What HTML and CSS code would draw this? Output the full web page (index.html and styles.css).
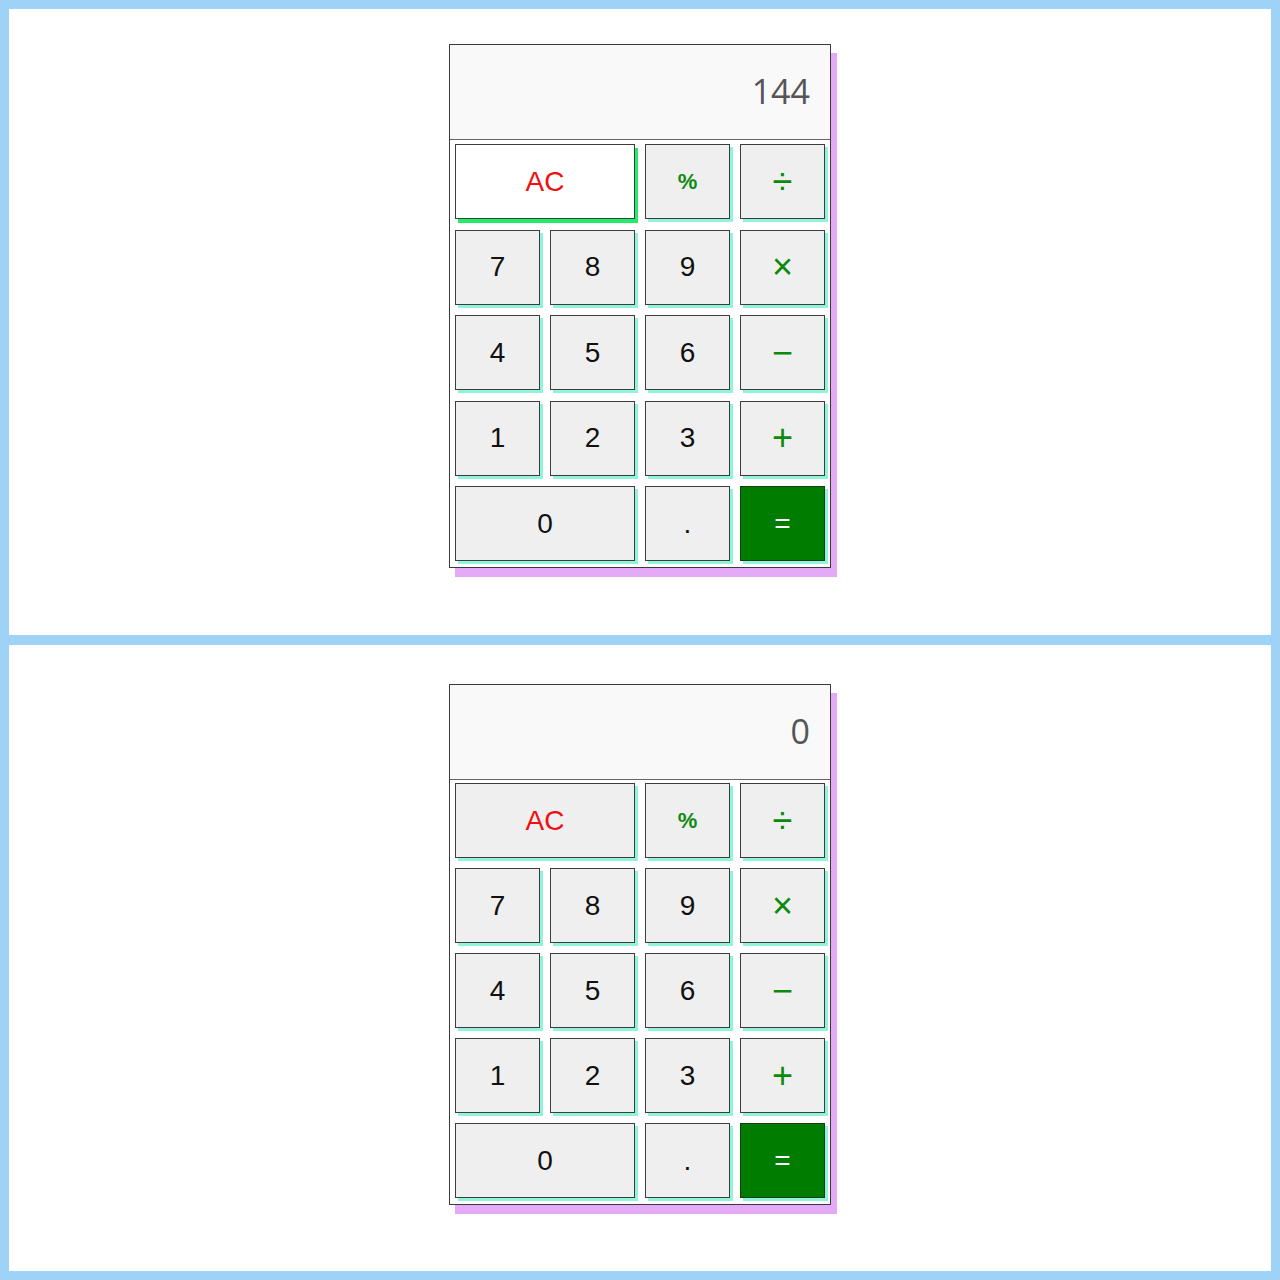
FILE: index.html
```html
<!DOCTYPE html>
<html>
<head>
<meta charset="utf-8">
<link rel="stylesheet" href="styles.css">
</head>
<body>
<div class="frame">
  <section class="panel panel-top">
    <div class="calc">
      <div class="display">144</div>
      <div class="keys">
        <button class="key key-wide key-ac key-active">AC</button>
        <button class="key key-pct">%</button>
        <button class="key key-op">÷</button>
        <button class="key">7</button>
        <button class="key">8</button>
        <button class="key">9</button>
        <button class="key key-op">×</button>
        <button class="key">4</button>
        <button class="key">5</button>
        <button class="key">6</button>
        <button class="key key-op">−</button>
        <button class="key">1</button>
        <button class="key">2</button>
        <button class="key">3</button>
        <button class="key key-op">+</button>
        <button class="key key-wide">0</button>
        <button class="key">.</button>
        <button class="key key-eq">=</button>
      </div>
    </div>
  </section>
  <section class="panel panel-bottom">
    <div class="calc">
      <div class="display">0</div>
      <div class="keys keys-tight">
        <button class="key key-wide key-ac">AC</button>
        <button class="key key-pct">%</button>
        <button class="key key-op">÷</button>
        <button class="key">7</button>
        <button class="key">8</button>
        <button class="key">9</button>
        <button class="key key-op">×</button>
        <button class="key">4</button>
        <button class="key">5</button>
        <button class="key">6</button>
        <button class="key key-op">−</button>
        <button class="key">1</button>
        <button class="key">2</button>
        <button class="key">3</button>
        <button class="key key-op">+</button>
        <button class="key key-wide">0</button>
        <button class="key">.</button>
        <button class="key key-eq">=</button>
      </div>
    </div>
  </section>
</div>
</body>
</html>
```

FILE: styles.css
```css
html, body {
  margin: 0;
  padding: 0;
}
body {
  background: #9ed2f6;
  font-family: "Liberation Sans", Arial, sans-serif;
}
.frame {
  padding: 9px;
  display: flex;
  flex-direction: column;
  gap: 10px;
}
.panel {
  background: #ffffff;
  height: 626px;
  box-sizing: border-box;
  display: flex;
  justify-content: center;
  align-items: flex-start;
}
.panel-top {
  padding-top: 35px;
}
.panel-bottom {
  padding-top: 39px;
}
.calc {
  width: 380px;
  border: 1px solid #3a3a3a;
  background: #ffffff;
  box-shadow: 6px 9px 0 #e4aaf7;
}
.display {
  height: 94px;
  border-bottom: 1px solid #666;
  background: #f9f9f9;
  box-sizing: content-box;
  display: flex;
  align-items: center;
  justify-content: flex-end;
  padding-right: 20px;
  padding-bottom: 3px;
  height: 91px;
  font-family: "Open Sans", "Noto Sans", sans-serif;
  font-size: 34px;
  color: #555;
}
.keys {
  display: grid;
  grid-template-columns: repeat(4, 85px);
  grid-auto-rows: 75px;
  column-gap: 10px;
  row-gap: 10.5px;
  padding: 4px 5px 6px 5px;
}
.keys-tight {
  row-gap: 10px;
  padding-top: 3px;
}
.key {
  margin: 0;
  padding: 0;
  border: 1px solid #3c3c3c;
  border-radius: 0;
  background: #efefef;
  box-shadow: 3px 3px 0 #8ff5da;
  font-family: "Liberation Sans", Arial, sans-serif;
  font-size: 28px;
  color: #111;
  display: flex;
  align-items: center;
  justify-content: center;
}
.key-wide {
  grid-column: span 2;
}
.key-ac {
  color: #ee1111;
  font-size: 28px;
}
.key-active {
  background: #ffffff;
  box-shadow: 3px 4px 0 #22ec6a;
}
.key-pct {
  color: #118a11;
  font-weight: bold;
  font-size: 22px;
}
.key-op {
  color: #0a8a0a;
  font-size: 36px;
}
.key-eq {
  background: #007c00;
  color: #ffffff;
  font-size: 28px;
  border-color: #1a3a1a;
}
```
